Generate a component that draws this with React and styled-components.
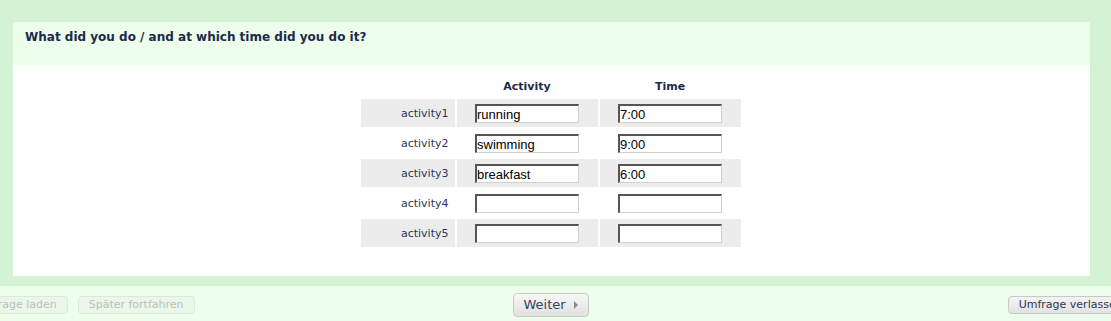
import React from 'react';
import styled, { createGlobalStyle } from 'styled-components';

const GlobalStyle = createGlobalStyle`
  html, body {
    margin: 0;
    padding: 0;
    background: #d4f2d4;
    overflow: hidden;
  }
  body {
    font-family: "DejaVu Sans", Verdana, sans-serif;
  }
`;

const Page = styled.div`
  width: 1111px;
  height: 321px;
  display: flex;
  flex-direction: column;
  background: #d4f2d4;
`;

const Panel = styled.div`
  margin: 22px 21px 10px 13px;
  background: #ffffff;
  display: flex;
  flex-direction: column;
`;

const QuestionHead = styled.div`
  height: 43px;
  box-sizing: border-box;
  background: #edfeec;
  padding: 8px 12px;
`;

const Title = styled.h3`
  margin: 0;
  font-size: 12px;
  line-height: 15px;
  font-weight: bold;
  color: #1b2a4b;
`;

const Body = styled.div`
  display: flex;
  justify-content: center;
  padding: 8px 0 27px;
`;

const Table = styled.table`
  border-collapse: separate;
  border-spacing: 2px;
  margin-right: 2px;
`;

const HeadCell = styled.th`
  height: 22px;
  padding: 0;
  font-size: 11px;
  font-weight: bold;
  color: #1b2a4b;
  text-align: center;
  vertical-align: middle;
`;

const Row = styled.tr`
  background: ${p => (p.$odd ? '#ececec' : 'transparent')};
`;

const Label = styled.td`
  width: 94px;
  height: 28px;
  padding: 0 6px 0 0;
  box-sizing: border-box;
  text-align: right;
  font-size: 11px;
  color: #2a3856;
`;

const Cell = styled.td`
  width: 141px;
  height: 28px;
  padding: 0;
  text-align: center;
  vertical-align: middle;
`;

const Field = styled.input`
  box-sizing: border-box;
  width: 104px;
  height: 19px;
  margin: 0;
  padding: 0;
  background: #fff;
  border-style: solid;
  border-width: 2px 1px 1px 2px;
  border-color: #555 #d4d0c8 #d4d0c8 #555;
  font-family: "Liberation Sans", Arial, sans-serif;
  font-size: 13px;
  color: #000;
  vertical-align: middle;
  outline: none;
`;

const BottomBar = styled.div`
  flex: 1;
  background: #edfeec;
  display: flex;
  align-items: center;
  padding-top: 2px;
  margin-left: -36px;
  width: 1200px;
`;

const SmallButton = styled.button`
  height: 18px;
  box-sizing: border-box;
  padding: 0 10px;
  margin-left: ${p => p.$gap || 0}px;
  border: 1px solid #dde8dc;
  border-radius: 4px;
  background: #eaf7e9;
  color: ${p => (p.$disabled ? '#b9c2b8' : '#2a3856')};
  font-family: "DejaVu Sans", Verdana, sans-serif;
  font-size: 11px;
  line-height: 16px;
  white-space: nowrap;
`;

const LeaveButton = styled(SmallButton)`
  background: linear-gradient(#f4f4f4, #e2e2e2);
  border-color: #c8c8c8;
`;

const NextButton = styled.button`
  height: 24px;
  box-sizing: border-box;
  margin-left: 318px;
  padding: 0 10px;
  display: flex;
  align-items: center;
  gap: 8px;
  border: 1px solid #c9c9c9;
  border-radius: 4px;
  background: linear-gradient(#f7f7f7, #e1e1e1);
  color: #34435f;
  font-family: "DejaVu Sans", Verdana, sans-serif;
  font-size: 13px;
`;

const Arrow = styled.span`
  width: 0;
  height: 0;
  border-top: 4px solid transparent;
  border-bottom: 4px solid transparent;
  border-left: 4px solid #8a8a8a;
`;

const rows = [
  ['activity1', 'running', '7:00'],
  ['activity2', 'swimming', '9:00'],
  ['activity3', 'breakfast', '6:00'],
  ['activity4', '', ''],
  ['activity5', '', ''],
];

export default function App() {
  return (
    <Page>
      <GlobalStyle />
      <Panel>
        <QuestionHead>
          <Title>What did you do / and at which time did you do it?</Title>
        </QuestionHead>
        <Body>
          <Table>
            <thead>
              <tr>
                <HeadCell />
                <HeadCell>Activity</HeadCell>
                <HeadCell>Time</HeadCell>
              </tr>
            </thead>
            <tbody>
              {rows.map(([label, act, time], i) => (
                <Row key={label} $odd={i % 2 === 0}>
                  <Label>{label}</Label>
                  <Cell><Field defaultValue={act} /></Cell>
                  <Cell><Field defaultValue={time} /></Cell>
                </Row>
              ))}
            </tbody>
          </Table>
        </Body>
      </Panel>
      <BottomBar>
        <SmallButton $disabled>Umfrage laden</SmallButton>
        <SmallButton $disabled $gap={10}>Später fortfahren</SmallButton>
        <NextButton>Weiter <Arrow /></NextButton>
        <LeaveButton $gap={419}>Umfrage verlassen</LeaveButton>
      </BottomBar>
    </Page>
  );
}
